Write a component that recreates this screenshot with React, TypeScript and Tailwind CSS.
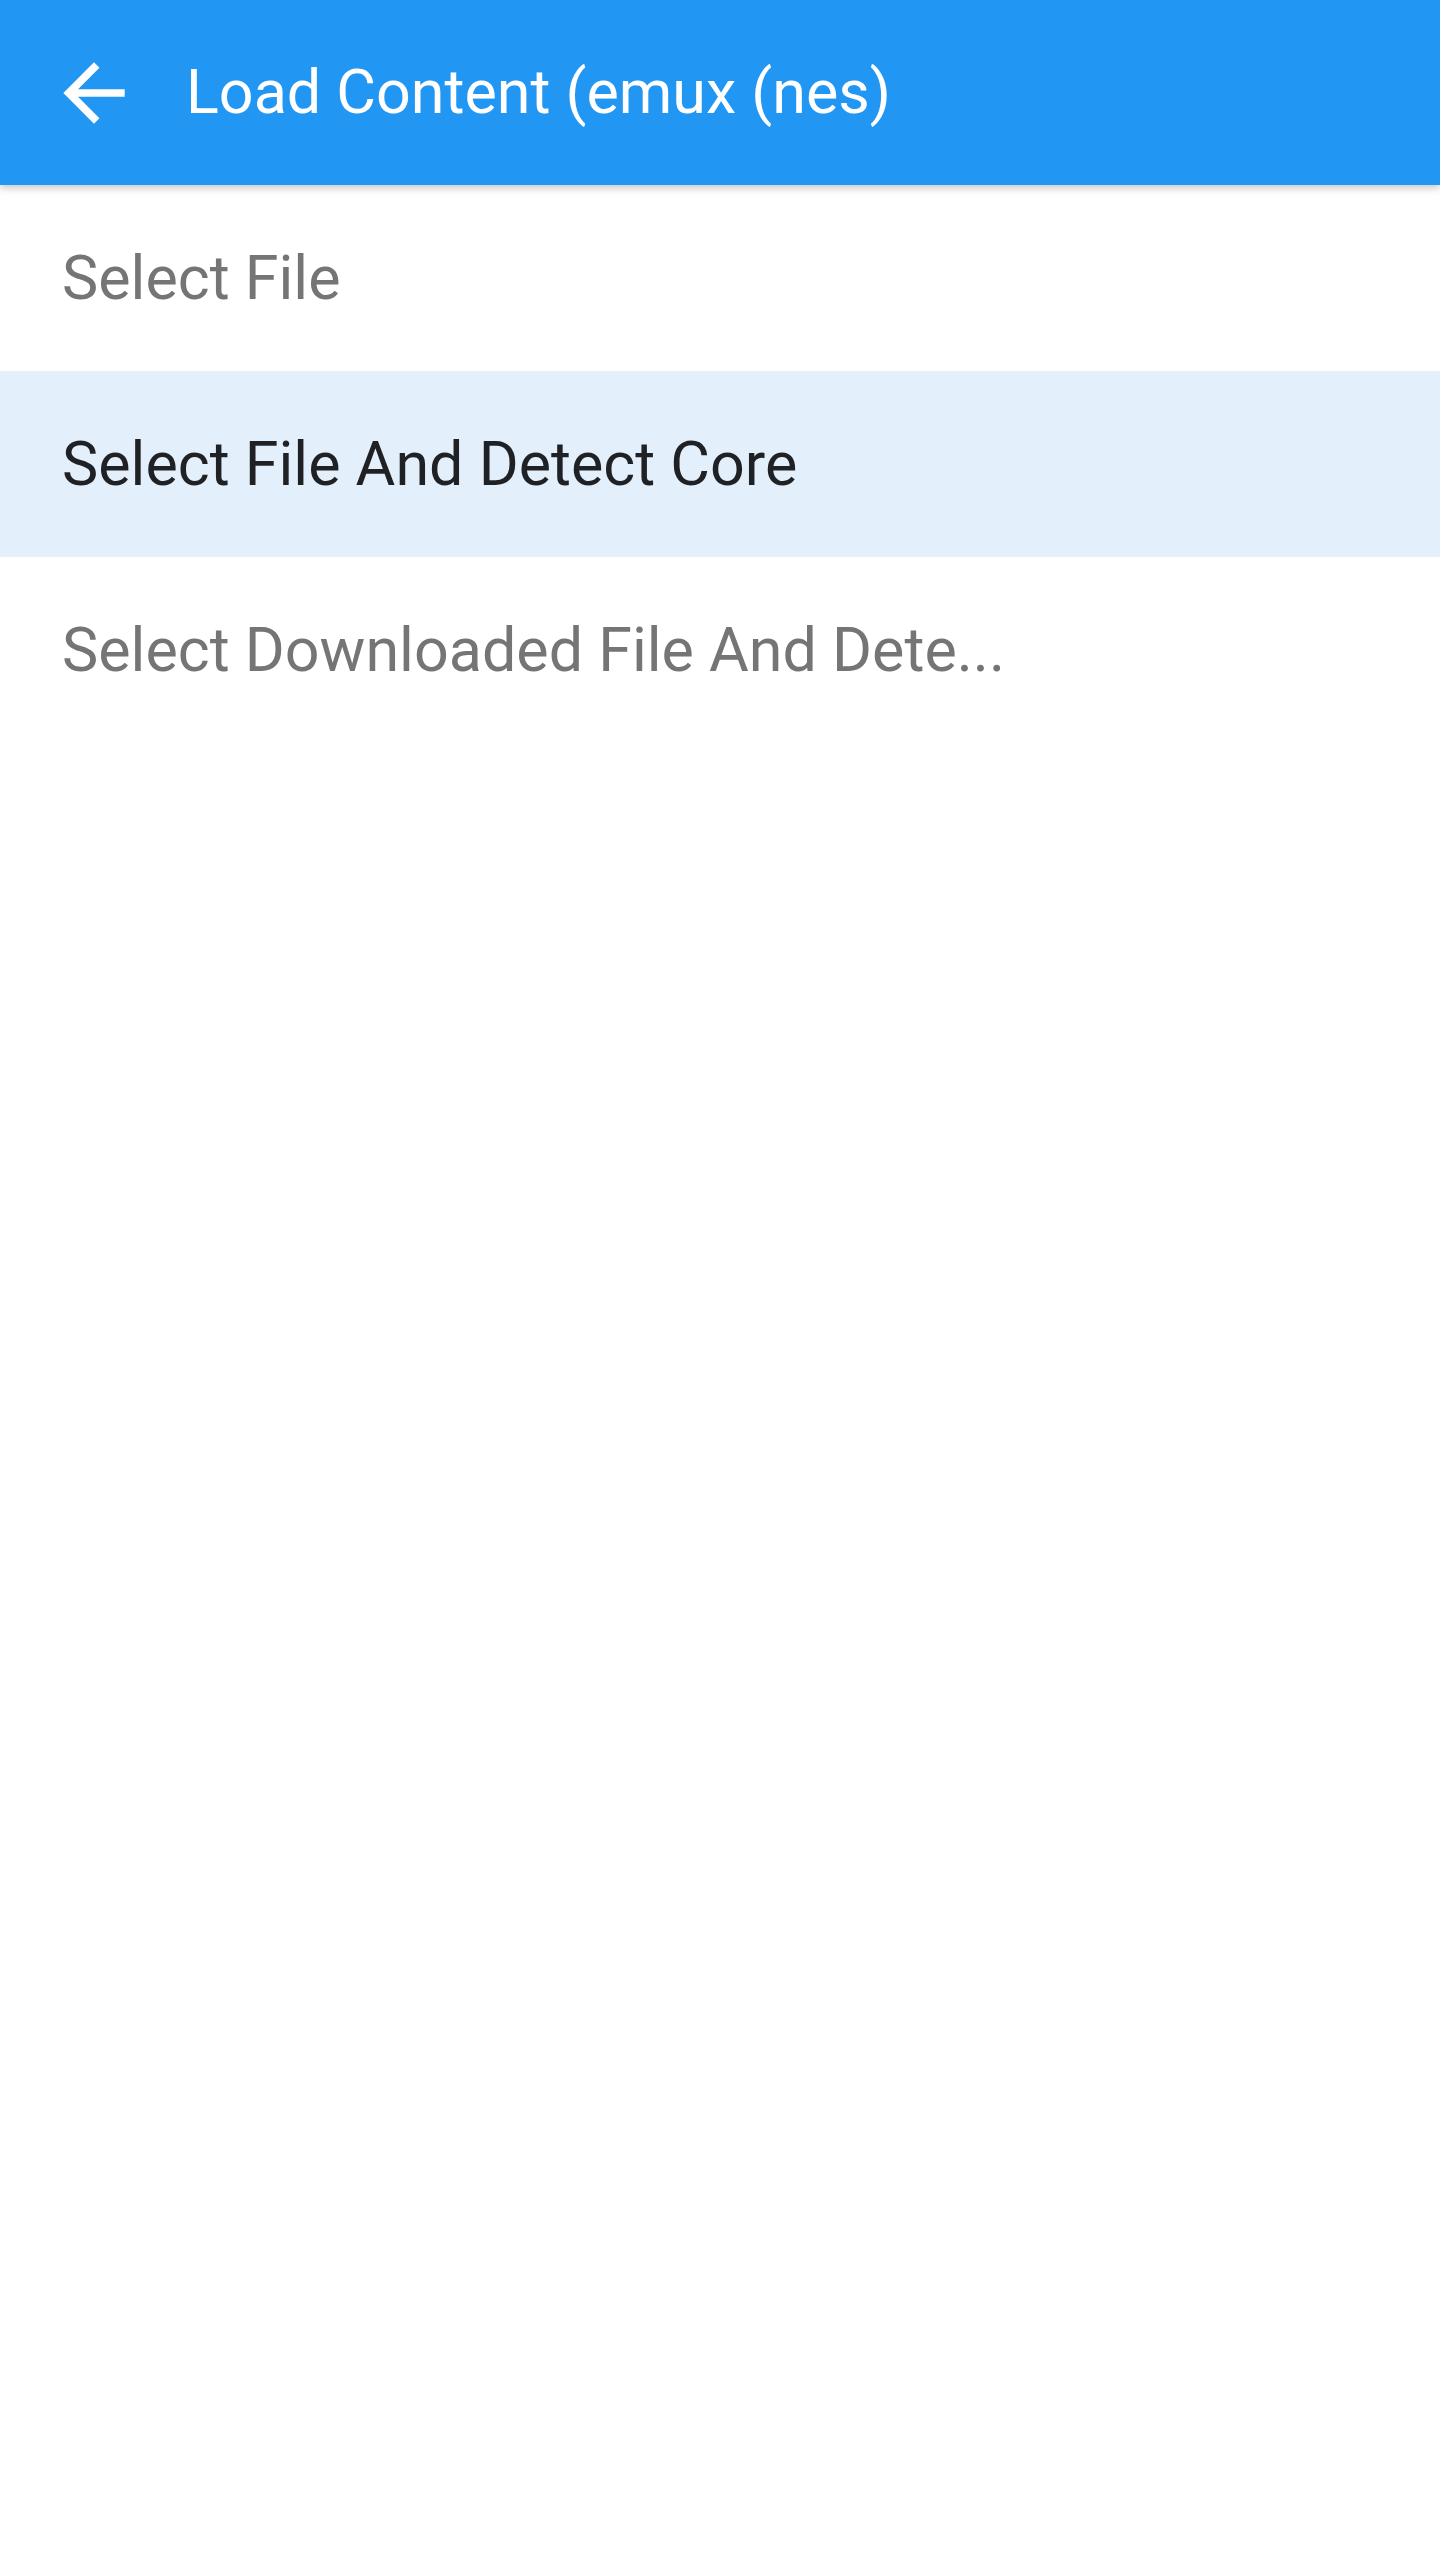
import React from "react";

const items = [
  { label: "Select File", active: false },
  { label: "Select File And Detect Core", active: true },
  { label: "Select Downloaded File And Dete...", active: false },
];

function ArrowBack() {
  return (
    <svg viewBox="0 0 24 24" className="w-[92px] h-[92px] shrink-0" fill="#ffffff">
      <path d="M20 11H7.83l5.59-5.59L12 4l-8 8 8 8 1.41-1.41L7.83 13H20v-2z" />
    </svg>
  );
}

export default function App() {
  return (
    <div
      className="w-[1440px] min-h-[2560px] bg-white"
      style={{ fontFamily: "Roboto, 'Noto Sans', sans-serif" }}
    >
      <header className="relative z-10 h-[185px] bg-[#2196F3] flex items-center pl-[48px] shadow-[0_3px_8px_rgba(0,0,0,0.22)]">
        <ArrowBack />
        <h1 className="ml-[46px] text-white text-[61px] font-normal leading-none">
          Load Content (emux (nes)
        </h1>
      </header>
      <ul>
        {items.map((it) => (
          <li
            key={it.label}
            className={
              it.active
                ? "h-[186px] flex items-center pl-[62px] bg-[#E3F0FC] text-[#1f2124] text-[61px] leading-none"
                : "h-[186px] flex items-center pl-[62px] bg-white text-[#757575] text-[61px] leading-none"
            }
          >
            {it.label}
          </li>
        ))}
      </ul>
    </div>
  );
}
